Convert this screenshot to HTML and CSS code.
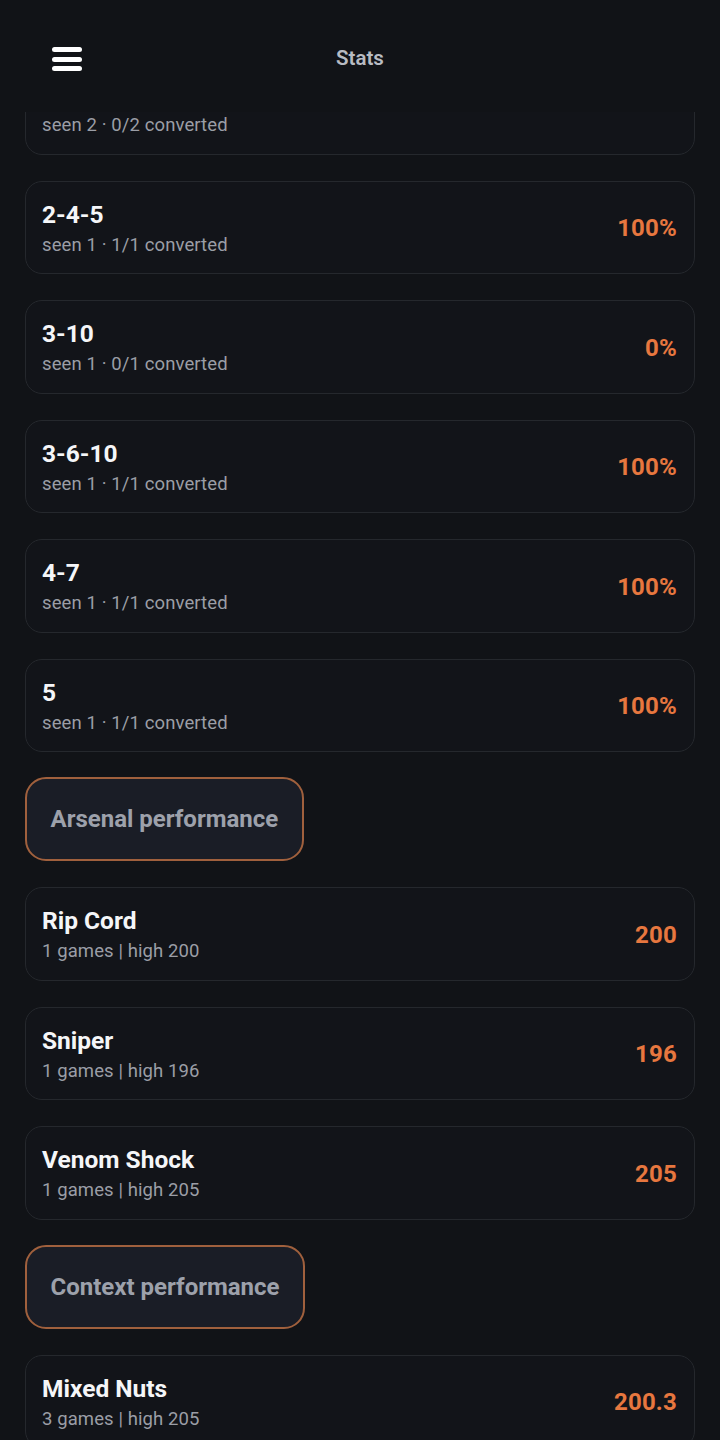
FILE: index.html
```html
<!DOCTYPE html>
<html>
<head>
<meta charset="utf-8">
<link rel="stylesheet" href="styles.css">
</head>
<body>
<div class="app">
  <header class="topbar">
    <button class="menu" aria-label="Menu">
      <span></span><span></span><span></span>
    </button>
    <div class="title">Stats</div>
    <div class="spacer"></div>
  </header>
  <main class="viewport">
    <div class="list">
      <div class="card"><div class="info"><div class="name">&nbsp;</div><div class="sub">seen 2 · 0/2 converted</div></div></div>
      <div class="card"><div class="info"><div class="name">2-4-5</div><div class="sub">seen 1 · 1/1 converted</div></div><div class="value">100%</div></div>
      <div class="card"><div class="info"><div class="name">3-10</div><div class="sub">seen 1 · 0/1 converted</div></div><div class="value">0%</div></div>
      <div class="card"><div class="info"><div class="name">3-6-10</div><div class="sub">seen 1 · 1/1 converted</div></div><div class="value">100%</div></div>
      <div class="card"><div class="info"><div class="name">4-7</div><div class="sub">seen 1 · 1/1 converted</div></div><div class="value">100%</div></div>
      <div class="card"><div class="info"><div class="name">5</div><div class="sub">seen 1 · 1/1 converted</div></div><div class="value">100%</div></div>
      <div class="section"><span class="pill">Arsenal performance</span></div>
      <div class="card"><div class="info"><div class="name">Rip Cord</div><div class="sub">1 games | high 200</div></div><div class="value">200</div></div>
      <div class="card"><div class="info"><div class="name">Sniper</div><div class="sub">1 games | high 196</div></div><div class="value">196</div></div>
      <div class="card"><div class="info"><div class="name">Venom Shock</div><div class="sub">1 games | high 205</div></div><div class="value">205</div></div>
      <div class="section"><span class="pill">Context performance</span></div>
      <div class="card last"><div class="info"><div class="name">Mixed Nuts</div><div class="sub">3 games | high 205</div></div><div class="value">200.3</div></div>
    </div>
  </main>
</div>
</body>
</html>
```

FILE: styles.css
```css
* { box-sizing: border-box; }
html, body {
  margin: 0;
  padding: 0;
  background: #111317;
}
body {
  font-family: Roboto, "Noto Sans", "Liberation Sans", sans-serif;
  color: #f3f4f6;
}
.app {
  width: 720px;
  height: 1440px;
  display: flex;
  flex-direction: column;
  overflow: hidden;
  background: #111317;
}
.topbar {
  height: 112px;
  flex: 0 0 112px;
  display: flex;
  align-items: flex-start;
  padding: 46px 52px 0 52px;
  background: #111317;
  position: relative;
  z-index: 2;
}
.menu {
  width: 30px;
  height: 25px;
  padding: 0;
  margin: 0;
  border: 0;
  background: transparent;
  display: flex;
  flex-direction: column;
  justify-content: space-between;
  padding-top: 1px;
}
.menu span {
  display: block;
  width: 30px;
  height: 5px;
  border-radius: 3px;
  background: #ffffff;
}
.title {
  flex: 1;
  text-align: center;
  font-size: 20.5px;
  font-weight: 600;
  color: #b8bbc2;
  line-height: 24px;
  margin-top: 0;
}
.spacer { width: 30px; }
.viewport {
  flex: 1;
  overflow: hidden;
}
.list {
  margin-top: -51px;
  padding: 0 25px 0 25px;
  display: flex;
  flex-direction: column;
  gap: 26px;
}
.card {
  display: flex;
  align-items: center;
  justify-content: space-between;
  background: #121419;
  border: 1.5px solid #25282d;
  border-radius: 17px;
  padding: 19px 17px 17.5px 16px;
}
.info {
  display: flex;
  flex-direction: column;
  min-width: 0;
}
.name {
  font-size: 24.5px;
  font-weight: 700;
  line-height: 28px;
  color: #f5f6f8;
  white-space: nowrap;
}
.sub {
  margin-top: 5px;
  font-size: 18.5px;
  line-height: 22px;
  color: #9b9ea6;
  letter-spacing: 0.1px;
  white-space: nowrap;
}
.value {
  font-size: 24px;
  font-weight: 700;
  color: #e7773f;
  letter-spacing: 0.2px;
}
.section {
  display: flex;
  margin-top: -1px;
}
.pill {
  display: inline-block;
  background: #1a1d26;
  border: 2px solid #a0603d;
  border-radius: 21px;
  padding: 26px 23.5px 26px 23.5px;
  font-size: 24px;
  font-weight: 700;
  line-height: 28px;
  color: #9da1ab;
  white-space: nowrap;
}
```
